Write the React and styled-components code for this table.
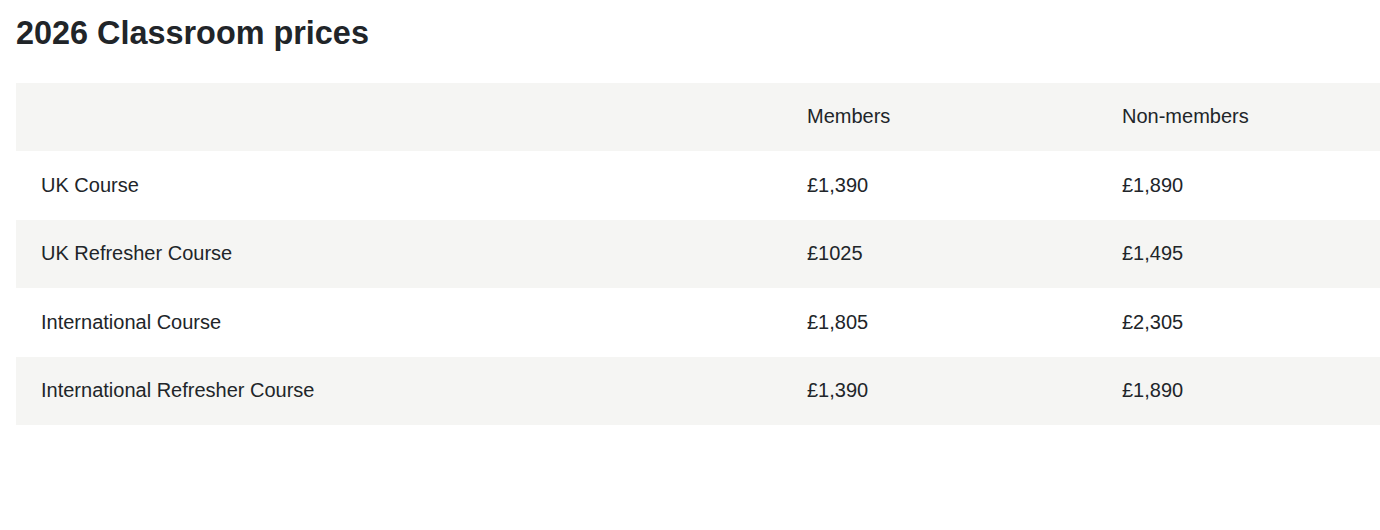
import React from 'react'
import styled, { createGlobalStyle } from 'styled-components'

const GlobalStyle = createGlobalStyle`
  body {
    margin: 0;
    background: #fff;
    overflow: hidden;
    font-family: "Liberation Sans", Arial, sans-serif;
    color: #212529;
  }
`;

const rows = [
  { name: 'UK Course', members: '£1,390', others: '£1,890' },
  { name: 'UK Refresher Course', members: '£1025', others: '£1,495' },
  { name: 'International Course', members: '£1,805', others: '£2,305' },
  { name: 'International Refresher Course', members: '£1,390', others: '£1,890' },
];

function App() {
  return (
    <Page>
      <GlobalStyle />
      <Title>2026 Classroom prices</Title>
      <Table>
        <Row $shaded>
          <Cell></Cell>
          <Cell>Members</Cell>
          <Cell>Non-members</Cell>
        </Row>
        {rows.map((r, i) => (
          <Row key={r.name} $shaded={i % 2 === 1}>
            <Cell>{r.name}</Cell>
            <Cell>{r.members}</Cell>
            <Cell>{r.others}</Cell>
          </Row>
        ))}
      </Table>
    </Page>
  )
};
export default App;

const Page = styled.div`
  padding: 14px 0 0 16px;
`;

const Title = styled.h2`
  margin: 0 0 31px;
  font-size: 32.4px;
  line-height: 38px;
  font-weight: 700;
  color: #212529;
`;

const Table = styled.div`
  width: 1364px;
`;

const Row = styled.div`
  display: grid;
  grid-template-columns: 766px 315px 1fr;
  background: ${p => (p.$shaded ? '#f5f5f3' : '#fff')};
`;

const Cell = styled.div`
  padding: 18.4px 25px 20px;
  font-size: 20px;
  line-height: 30px;
  color: #212529;
`;
